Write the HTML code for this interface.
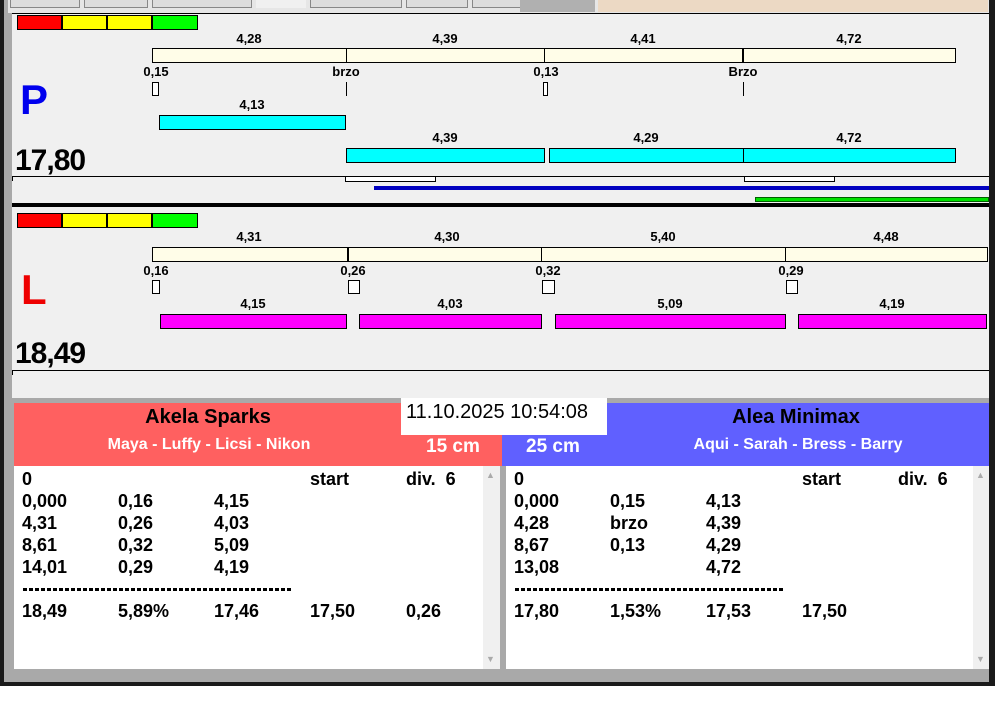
<!DOCTYPE html>
<html><head><meta charset="utf-8"><style>
*{margin:0;padding:0;box-sizing:border-box}
body{width:995px;height:716px;background:#fff;position:relative;overflow:hidden;font-family:"Liberation Sans",Arial,sans-serif}
div,span{position:absolute}
.b{font-weight:bold}
.l{font-size:13px;font-weight:bold;transform:translateX(-50%);white-space:nowrap;line-height:13px}
.y{background:#fffde8;border:1px solid #000}
.c{background:#00ffff;border:1px solid #000}
.m{background:#ff00ff;border:1px solid #000}
.bx{border:1px solid #000;background:#fff}
.vl{width:1px;background:#000}
.t{font-size:18px;font-weight:bold;line-height:22px;white-space:nowrap}
.d{height:3px;background:repeating-linear-gradient(90deg,#000 0 4px,transparent 4px 6px)}
</style></head><body>
<div style="left:0;top:0;width:995px;height:686px;background:#1a1a1a"></div>
<div style="left:4px;top:0;width:985px;height:682px;background:#a9a9a9"></div>
<div style="left:8px;top:0;width:981px;height:13px;background:#e6e6e6"></div>
<div style="left:520px;top:0;width:75px;height:12px;background:#b0b0b0"></div>
<div style="left:598px;top:0;width:390px;height:12px;background:#ecd9c4"></div>
<div style="left:10px;top:0;width:510px;height:9px;overflow:hidden">
<span style="left:0;top:-2px;width:70px;height:10px;border:1px solid #888;background:#ddd"></span><span style="left:74px;top:-2px;width:64px;height:10px;border:1px solid #888;background:#ddd"></span><span style="left:142px;top:-2px;width:100px;height:10px;border:1px solid #888;background:#ddd"></span><span style="left:246px;top:-2px;width:50px;height:10px;background:#f0f0f0"></span><span style="left:300px;top:-2px;width:92px;height:10px;border:1px solid #888;background:#ddd"></span><span style="left:396px;top:-2px;width:62px;height:10px;border:1px solid #888;background:#ddd"></span><span style="left:462px;top:-2px;width:54px;height:10px;border:1px solid #888;background:#ddd"></span></div>

<div style="left:12px;top:13px;width:977px;height:191px;background:#f0f0f0;border-top:1px solid #000"></div>
<div style="left:17px;top:15px;width:45px;height:15px;background:#f00;border:1px solid #000"></div>
<div style="left:62px;top:15px;width:45px;height:15px;background:#ff0;border:1px solid #000"></div>
<div style="left:107px;top:15px;width:45px;height:15px;background:#ff0;border:1px solid #000"></div>
<div style="left:152px;top:15px;width:46px;height:15px;background:#0f0;border:1px solid #000"></div>
<div class="y" style="left:152px;top:48px;width:804px;height:15px"></div>
<div class="vl" style="left:346px;top:48px;height:15px"></div>
<div class="vl" style="left:544px;top:48px;height:15px"></div>
<div class="vl" style="left:742px;top:48px;height:15px;width:2px"></div>
<div class="l" style="left:249px;top:32px">4,28</div>
<div class="l" style="left:445px;top:32px">4,39</div>
<div class="l" style="left:643px;top:32px">4,41</div>
<div class="l" style="left:849px;top:32px">4,72</div>
<div class="l" style="left:156px;top:65px">0,15</div>
<div class="l" style="left:346px;top:65px">brzo</div>
<div class="l" style="left:546px;top:65px">0,13</div>
<div class="l" style="left:743px;top:65px">Brzo</div>
<div class="bx" style="left:152px;top:82px;width:7px;height:14px"></div>
<div class="vl" style="left:346px;top:82px;height:14px"></div>
<div class="bx" style="left:543px;top:82px;width:5px;height:14px"></div>
<div class="vl" style="left:743px;top:82px;height:14px"></div>
<div style="left:20px;top:76px;font-size:42px;font-weight:bold;color:#0000ee;line-height:48px">P</div>
<div class="l" style="left:252px;top:98px">4,13</div>
<div class="c" style="left:159px;top:115px;width:187px;height:15px"></div>
<div class="l" style="left:445px;top:131px">4,39</div>
<div class="l" style="left:646px;top:131px">4,29</div>
<div class="l" style="left:849px;top:131px">4,72</div>
<div class="c" style="left:346px;top:148px;width:199px;height:15px"></div>
<div class="c" style="left:549px;top:148px;width:195px;height:15px"></div>
<div class="c" style="left:743px;top:148px;width:213px;height:15px"></div>
<div style="left:15px;top:143px;font-size:30px;font-weight:bold;line-height:36px;letter-spacing:-1px">17,80</div>
<div style="left:12px;top:176px;width:977px;height:1px;background:#000"></div>
<div class="vl" style="left:12px;top:176px;height:5px"></div>
<div class="bx" style="left:345px;top:176px;width:91px;height:6px"></div>
<div class="bx" style="left:744px;top:176px;width:91px;height:6px"></div>
<div style="left:374px;top:186px;width:615px;height:4px;background:#0000c0"></div>
<div style="left:755px;top:197px;width:234px;height:5px;background:#00e000;border:1px solid #006000"></div>
<div style="left:12px;top:203px;width:977px;height:4px;background:#000"></div>

<div style="left:12px;top:207px;width:977px;height:191px;background:#f0f0f0"></div>
<div style="left:17px;top:213px;width:45px;height:15px;background:#f00;border:1px solid #000"></div>
<div style="left:62px;top:213px;width:45px;height:15px;background:#ff0;border:1px solid #000"></div>
<div style="left:107px;top:213px;width:45px;height:15px;background:#ff0;border:1px solid #000"></div>
<div style="left:152px;top:213px;width:46px;height:15px;background:#0f0;border:1px solid #000"></div>
<div class="y" style="left:152px;top:247px;width:836px;height:15px"></div>
<div class="vl" style="left:347px;top:247px;height:15px;width:2px"></div>
<div class="vl" style="left:541px;top:247px;height:15px"></div>
<div class="vl" style="left:785px;top:247px;height:15px"></div>
<div class="l" style="left:249px;top:230px">4,31</div>
<div class="l" style="left:447px;top:230px">4,30</div>
<div class="l" style="left:663px;top:230px">5,40</div>
<div class="l" style="left:886px;top:230px">4,48</div>
<div class="l" style="left:156px;top:264px">0,16</div>
<div class="l" style="left:353px;top:264px">0,26</div>
<div class="l" style="left:548px;top:264px">0,32</div>
<div class="l" style="left:791px;top:264px">0,29</div>
<div class="bx" style="left:152px;top:280px;width:8px;height:14px"></div>
<div class="bx" style="left:348px;top:280px;width:12px;height:14px"></div>
<div class="bx" style="left:542px;top:280px;width:13px;height:14px"></div>
<div class="bx" style="left:786px;top:280px;width:12px;height:14px"></div>
<div style="left:21px;top:266px;font-size:42px;font-weight:bold;color:#ee0000;line-height:48px">L</div>
<div class="l" style="left:253px;top:297px">4,15</div>
<div class="l" style="left:450px;top:297px">4,03</div>
<div class="l" style="left:670px;top:297px">5,09</div>
<div class="l" style="left:892px;top:297px">4,19</div>
<div class="m" style="left:160px;top:314px;width:187px;height:15px"></div>
<div class="m" style="left:359px;top:314px;width:183px;height:15px"></div>
<div class="m" style="left:555px;top:314px;width:231px;height:15px"></div>
<div class="m" style="left:798px;top:314px;width:189px;height:15px"></div>
<div style="left:15px;top:336px;font-size:30px;font-weight:bold;line-height:36px;letter-spacing:-1px">18,49</div>
<div style="left:12px;top:370px;width:977px;height:1px;background:#000"></div>
<div class="vl" style="left:12px;top:370px;height:5px"></div>

<div style="left:14px;top:403px;width:488px;height:63px;background:#ff6060"></div>
<div style="left:502px;top:403px;width:487px;height:63px;background:#6060ff"></div>
<div style="left:401px;top:398px;width:206px;height:37px;background:#fff"></div>
<div style="left:406px;top:400px;font-size:20px;line-height:24px">11.10.2025 10:54:08</div>
<div class="b" style="left:208px;top:405px;font-size:20px;line-height:24px;transform:translateX(-50%);white-space:nowrap">Akela Sparks</div>
<div class="b" style="left:209px;top:435px;font-size:16px;line-height:20px;color:#fff;transform:translateX(-50%);white-space:nowrap">Maya - Luffy - Licsi - Nikon</div>
<div class="b" style="left:426px;top:436px;font-size:19px;line-height:22px;color:#fff;white-space:nowrap">15 cm</div>
<div class="b" style="left:526px;top:436px;font-size:19px;line-height:22px;color:#fff;white-space:nowrap">25 cm</div>
<div class="b" style="left:796px;top:405px;font-size:20px;line-height:24px;transform:translateX(-50%);white-space:nowrap">Alea Minimax</div>
<div class="b" style="left:798px;top:435px;font-size:16px;line-height:20px;color:#fff;transform:translateX(-50%);white-space:nowrap">Aqui - Sarah - Bress - Barry</div>

<div style="left:14px;top:466px;width:469px;height:203px;background:#fff"></div>
<div style="left:483px;top:466px;width:17px;height:203px;background:#f0f0f0"></div>
<div style="left:506px;top:466px;width:467px;height:203px;background:#fff"></div>
<div style="left:973px;top:466px;width:16px;height:203px;background:#f0f0f0"></div>
<div style="left:486px;top:470px;font-size:9px;color:#aaa">▲</div>
<div style="left:486px;top:654px;font-size:9px;color:#aaa">▼</div>
<div style="left:976px;top:470px;font-size:9px;color:#aaa">▲</div>
<div style="left:976px;top:654px;font-size:9px;color:#aaa">▼</div>

<div class="t" style="left:22px;top:468px">0</div>
<div class="t" style="left:310px;top:468px">start</div>
<div class="t" style="left:406px;top:468px">div.&nbsp; 6</div>
<div class="t" style="left:22px;top:490px">0,000</div><div class="t" style="left:118px;top:490px">0,16</div><div class="t" style="left:214px;top:490px">4,15</div>
<div class="t" style="left:22px;top:512px">4,31</div><div class="t" style="left:118px;top:512px">0,26</div><div class="t" style="left:214px;top:512px">4,03</div>
<div class="t" style="left:22px;top:534px">8,61</div><div class="t" style="left:118px;top:534px">0,32</div><div class="t" style="left:214px;top:534px">5,09</div>
<div class="t" style="left:22px;top:556px">14,01</div><div class="t" style="left:118px;top:556px">0,29</div><div class="t" style="left:214px;top:556px">4,19</div>
<div class="d" style="left:23px;top:588px;width:269px"></div>
<div class="t" style="left:22px;top:600px">18,49</div><div class="t" style="left:118px;top:600px">5,89%</div><div class="t" style="left:214px;top:600px">17,46</div><div class="t" style="left:310px;top:600px">17,50</div><div class="t" style="left:406px;top:600px">0,26</div>

<div class="t" style="left:514px;top:468px">0</div>
<div class="t" style="left:802px;top:468px">start</div>
<div class="t" style="left:898px;top:468px">div.&nbsp; 6</div>
<div class="t" style="left:514px;top:490px">0,000</div><div class="t" style="left:610px;top:490px">0,15</div><div class="t" style="left:706px;top:490px">4,13</div>
<div class="t" style="left:514px;top:512px">4,28</div><div class="t" style="left:610px;top:512px">brzo</div><div class="t" style="left:706px;top:512px">4,39</div>
<div class="t" style="left:514px;top:534px">8,67</div><div class="t" style="left:610px;top:534px">0,13</div><div class="t" style="left:706px;top:534px">4,29</div>
<div class="t" style="left:514px;top:556px">13,08</div><div class="t" style="left:706px;top:556px">4,72</div>
<div class="d" style="left:515px;top:588px;width:269px"></div>
<div class="t" style="left:514px;top:600px">17,80</div><div class="t" style="left:610px;top:600px">1,53%</div><div class="t" style="left:706px;top:600px">17,53</div><div class="t" style="left:802px;top:600px">17,50</div>
</body></html>
